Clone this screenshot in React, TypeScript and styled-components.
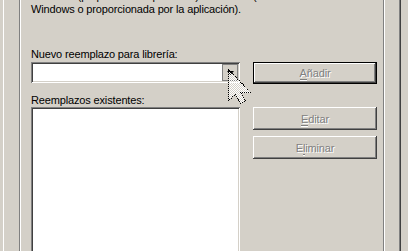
import React from "react";
import styled, {createGlobalStyle, css} from "styled-components";

const GlobalStyle = createGlobalStyle`
  html, body {
    margin: 0;
    padding: 0;
    background: #d4d0c8;
    overflow: hidden;
  }
  body {
    font-family: "Liberation Sans", Arial, sans-serif;
    font-size: 11px;
    letter-spacing: -0.15px;
    color: #000;
  }
`

const face = "#d4d0c8"
const shadow = "#808080"
const dark = "#404040"

const Window = styled.div`
  position: relative;
  width: 408px;
  height: 251px;
  overflow: hidden;
  display: flex;
`

/** tab page: white left edge, dark right edge */
const TabPane = styled.div`
  box-sizing: border-box;
  margin: -30px 0 0 3px;
  width: 398px;
  height: 320px;
  padding: 5px 0 0 15px;
  border-left: 1px solid #fff;
  border-right: 1px solid ${dark};
  box-shadow: inset -1px 0 0 ${shadow};
`

/** etched group frame */
const GroupBox = styled.div`
  box-sizing: border-box;
  width: 365px;
  height: 300px;
  padding: 14px 6px 0 11px;
  border: 1px solid ${shadow};
  box-shadow: 1px 1px 0 #fff, inset 1px 1px 0 #fff;
`

const Hint = styled.p`
  margin: 0;
  line-height: 13px;
`

const Form = styled.div`
  display: grid;
  grid-template-columns: 209px 124px;
  column-gap: 13px;
  margin-top: 32px;
`

const Label = styled.div<{$gap?: number}>`
  grid-column: 1 / span 2;
  line-height: 13px;
  margin-top: ${p => p.$gap ?? 0}px;
`

const sunken = css`
  box-sizing: border-box;
  background: #fff;
  box-shadow: inset 1px 1px 0 ${shadow}, inset -1px -1px 0 #fff,
    inset 2px 2px 0 ${dark}, inset -2px -2px 0 ${face};
`

const Combo = styled.div`
  ${sunken};
  height: 21px;
  margin-top: 1px;
  padding: 2px;
  display: flex;
  justify-content: flex-end;
`

const DropButton = styled.div`
  box-sizing: border-box;
  width: 16px;
  height: 17px;
  background: ${face};
  border: 1px solid ${shadow};
  display: flex;
  align-items: center;
  justify-content: center;
  padding: 1px 0 0 1px;
`

const ListBox = styled.div`
  ${sunken};
  height: 160px;
`

const ButtonStack = styled.div`
  display: flex;
  flex-direction: column;
  gap: 6px;
`

const Button = styled.button<{$isDefault?: boolean; $top?: number; $height?: number}>`
  box-sizing: border-box;
  width: 124px;
  height: ${p => p.$height ?? 23}px;
  margin: ${p => p.$top ?? 0}px 0 0 0;
  padding: 0;
  background: ${face};
  font: inherit;
  letter-spacing: inherit;
  color: ${shadow};
  text-shadow: 1px 1px 0 #fff;
  border: none;
  box-shadow: inset -1px -1px 0 ${dark}, inset 1px 1px 0 #fff,
    inset -2px -2px 0 ${shadow}, inset 2px 2px 0 ${face};
  ${p => p.$isDefault && css`
    border: 1px solid #000;
  `}
  u {
    text-decoration: none;
    border-bottom: 1px solid ${shadow};
    box-shadow: 0 1px 0 #fff;
  }
`

const Cursor = styled.svg`
  position: absolute;
  left: 228px;
  top: 69px;
`

export default function App(): React.JSX.Element {
    return (
        <Window>
            <GlobalStyle/>
            <TabPane>
                <GroupBox>
                    <Hint>
                        la interna (proporcionada por Wine) o la nativa (obtenida de<br/>
                        Windows o proporcionada por la aplicación).
                    </Hint>
                    <Form>
                        <Label>Nuevo reemplazo para librería:</Label>
                        <Combo>
                            <DropButton>
                                <svg width="7" height="4" viewBox="0 0 7 4">
                                    <path d="M0 0h7L3.5 4z" fill="#000"/>
                                </svg>
                            </DropButton>
                        </Combo>
                        <Button $isDefault $top={1} $height={22} disabled><u>A</u>ñadir</Button>
                        <Label $gap={10}>Reemplazos existentes:</Label>
                        <ListBox/>
                        <ButtonStack>
                            <Button disabled><u>E</u>ditar</Button>
                            <Button disabled>E<u>l</u>iminar</Button>
                        </ButtonStack>
                    </Form>
                </GroupBox>
            </TabPane>
            {/* dithered mouse pointer over the drop button */}
            <Cursor width="26" height="36" viewBox="0 0 26 36" shapeRendering="crispEdges">
                <defs>
                    <pattern id="dither" width="2" height="2" patternUnits="userSpaceOnUse">
                        <rect x="0" y="0" width="1" height="1" fill="#fff"/>
                        <rect x="1" y="1" width="1" height="1" fill="#fff"/>
                    </pattern>
                </defs>
                <path d="M0.5 0.5V31.5L7.5 25.5L12.5 34.5L17.5 32.5L12.5 23.5H22.5Z"
                      fill="url(#dither)" stroke="#000" strokeDasharray="1 1"/>
            </Cursor>
        </Window>
    )
}
